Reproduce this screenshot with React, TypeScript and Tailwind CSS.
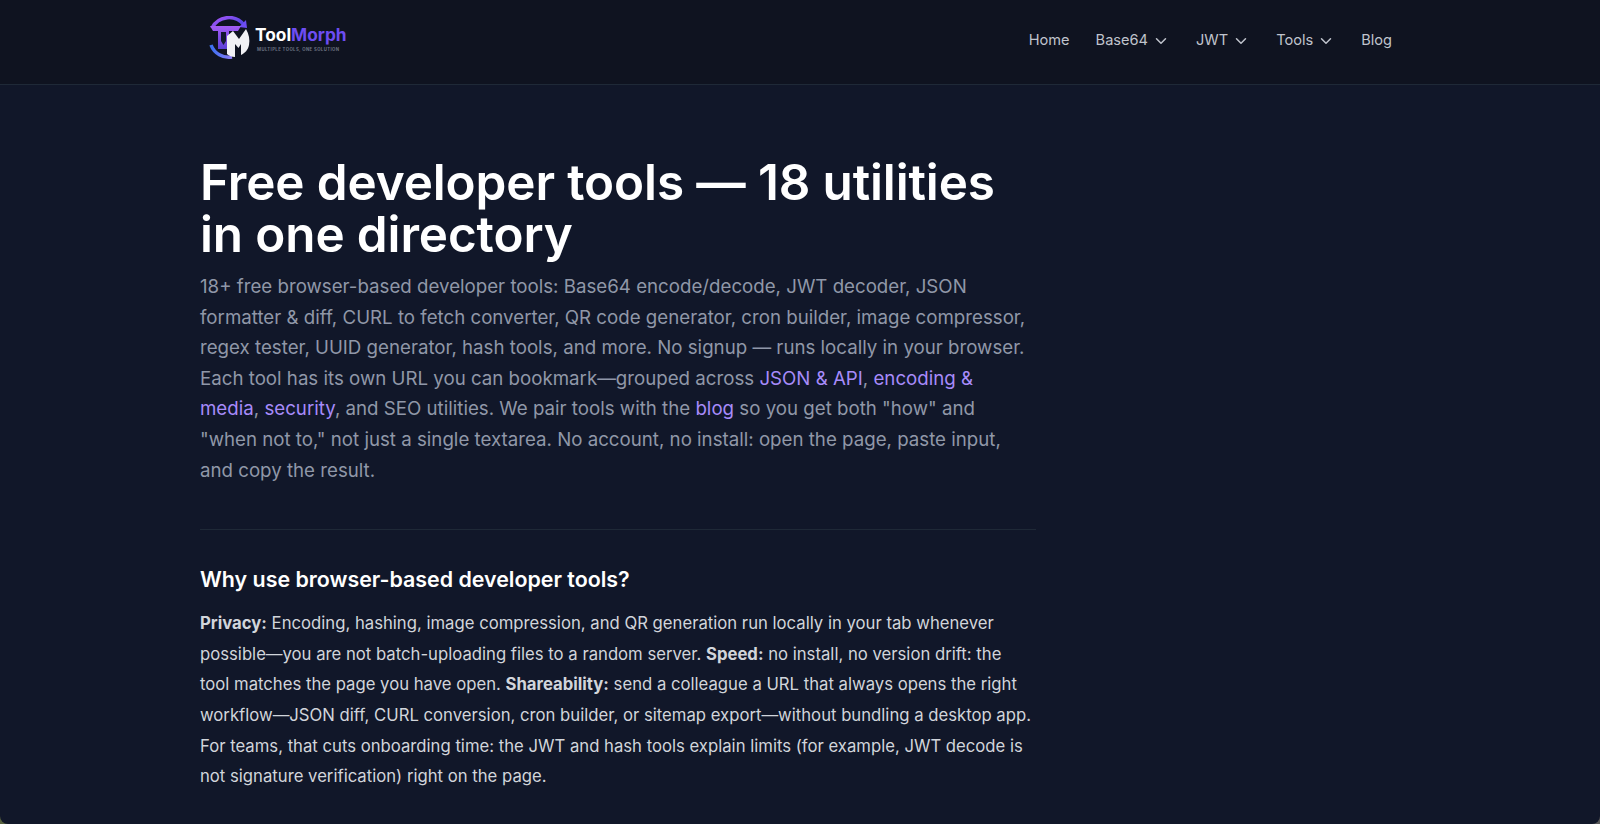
import { ChevronDown } from 'lucide-react';

function Logo() {
  return (
    <div className="flex items-start">
      <svg width="44" height="44" viewBox="0 0 44 44" fill="none" className="shrink-0">
        <defs>
          <linearGradient id="ring" x1="0" y1="0" x2="1" y2="0.6">
            <stop offset="0" stopColor="#a855f7" />
            <stop offset="1" stopColor="#4f46e5" />
          </linearGradient>
          <linearGradient id="ringLow" x1="0" y1="0" x2="1" y2="0">
            <stop offset="0" stopColor="#3b6ff0" />
            <stop offset="1" stopColor="#8b7cf6" />
          </linearGradient>
          <linearGradient id="tee" x1="0" y1="0" x2="0" y2="1">
            <stop offset="0" stopColor="#a45cf5" />
            <stop offset="1" stopColor="#5b3fd6" />
          </linearGradient>
        </defs>
        <path d="M4 12A19 19 0 0 1 36 9" stroke="url(#ring)" strokeWidth="3.500" />
        <path d="M38 4l1 8-8-1z" fill="#6d4df2" />
        <path d="M3 29A19 19 0 0 0 24 41" stroke="url(#ringLow)" strokeWidth="3.500" />
        <path d="M2 10h31l-3 5h-9v18H10V15H5z" fill="url(#tee)" />
        <path d="M13 16h5v9l-2.500 4L13 25z" fill="#141830" />
        <path
          d="M19 20L25 15L31 23L38 13C41 18 42 24 41 29C40 34 37 37 33 39V28L30.500 32L27 28V41C24 41 21 40 19 38Z"
          fill="#f1f1f4"
        />
      </svg>
      <div className="ml-[3px] flex flex-col pt-[10px]">
        <div className="text-[17.3px] font-bold leading-[18px] text-white">
          Tool<span className="text-[#6d4df2]">Morph</span>
        </div>
        <div className="mt-[3px] ml-[2px] text-[4.3px] font-bold leading-[6px] tracking-[0.09em] text-[#6b7280]">
          MULTIPLE TOOLS, ONE SOLUTION
        </div>
      </div>
    </div>
  );
}

function NavItem({ label, menu }: { label: string; menu?: boolean }) {
  return (
    <a className="flex items-center gap-[4px] text-[14.6px] leading-[21px] text-[#c0c4cd]">
      {label}
      {menu && <ChevronDown className="h-[18px] w-[18px]" strokeWidth={2} />}
    </a>
  );
}

export default function App() {
  return (
    <div className="h-[824px] overflow-hidden bg-gradient-to-r from-[#56603e] to-[#5a5a5a] font-['Inter',sans-serif]">
      <div className="h-full overflow-hidden rounded-b-[8px] bg-[#111729]">
        <header className="h-[85px] border-b border-[#1f2937] bg-[#0f1320]">
          <div className="mx-auto flex h-[84px] w-[1200px] items-start justify-between">
            <div className="pl-[8px] pt-[16px]">
              <Logo />
            </div>
            <nav className="flex items-center gap-[26px] pr-[8px] pt-[30px]">
              <NavItem label="Home" />
              <NavItem label="Base64" menu />
              <NavItem label="JWT" menu />
              <NavItem label="Tools" menu />
              <NavItem label="Blog" />
            </nav>
          </div>
        </header>
        <main className="mx-auto w-[1200px] pt-[71px]">
          <div className="w-[836px]">
            <h1 className="max-w-[810px] text-[49.4px] font-semibold leading-[52px] tracking-[-0.002em] text-white">
              Free developer tools — 18 utilities in one directory
            </h1>
            <p className="mt-[12px] text-[18.7px] leading-[30.6px] text-[#9097a8]">
              18+ free browser-based developer tools: Base64 encode/decode, JWT decoder, JSON formatter &amp; diff, CURL to fetch converter, QR code generator, cron builder, image compressor, regex tester, UUID generator, hash tools, and more. No signup — runs locally in your browser. Each tool has its own URL you can bookmark—grouped across{' '}
              <a className="text-[#a78bfa]">JSON &amp; API</a>, <a className="text-[#a78bfa]">encoding &amp; media</a>,{' '}
              <a className="text-[#a78bfa]">security</a>, and SEO utilities. We pair tools with the{' '}
              <a className="text-[#a78bfa]">blog</a> so you get both "how" and "when not to," not just a single textarea. No account, no install: open the page, paste input, and copy the result.
            </p>
            <hr className="mt-[43px] border-[#1f2937]" />
            <h2 className="mt-[35px] text-[21.4px] font-semibold leading-[28px] text-white">
              Why use browser-based developer tools?
            </h2>
            <p className="mt-[15px] max-w-[832px] text-[16.7px] leading-[30.6px] text-[#d1d5db]">
              <strong className="font-bold">Privacy:</strong> Encoding, hashing, image compression, and QR generation run locally in your tab whenever possible—you are not batch-uploading files to a random server.{' '}
              <strong className="font-bold">Speed:</strong> no install, no version drift: the tool matches the page you have open.{' '}
              <strong className="font-bold">Shareability:</strong> send a colleague a URL that always opens the right workflow—JSON diff, CURL conversion, cron builder, or sitemap export—without bundling a desktop app. For teams, that cuts onboarding time: the JWT and hash tools explain limits (for example, JWT decode is not signature verification) right on the page.
            </p>
          </div>
        </main>
      </div>
    </div>
  );
}
